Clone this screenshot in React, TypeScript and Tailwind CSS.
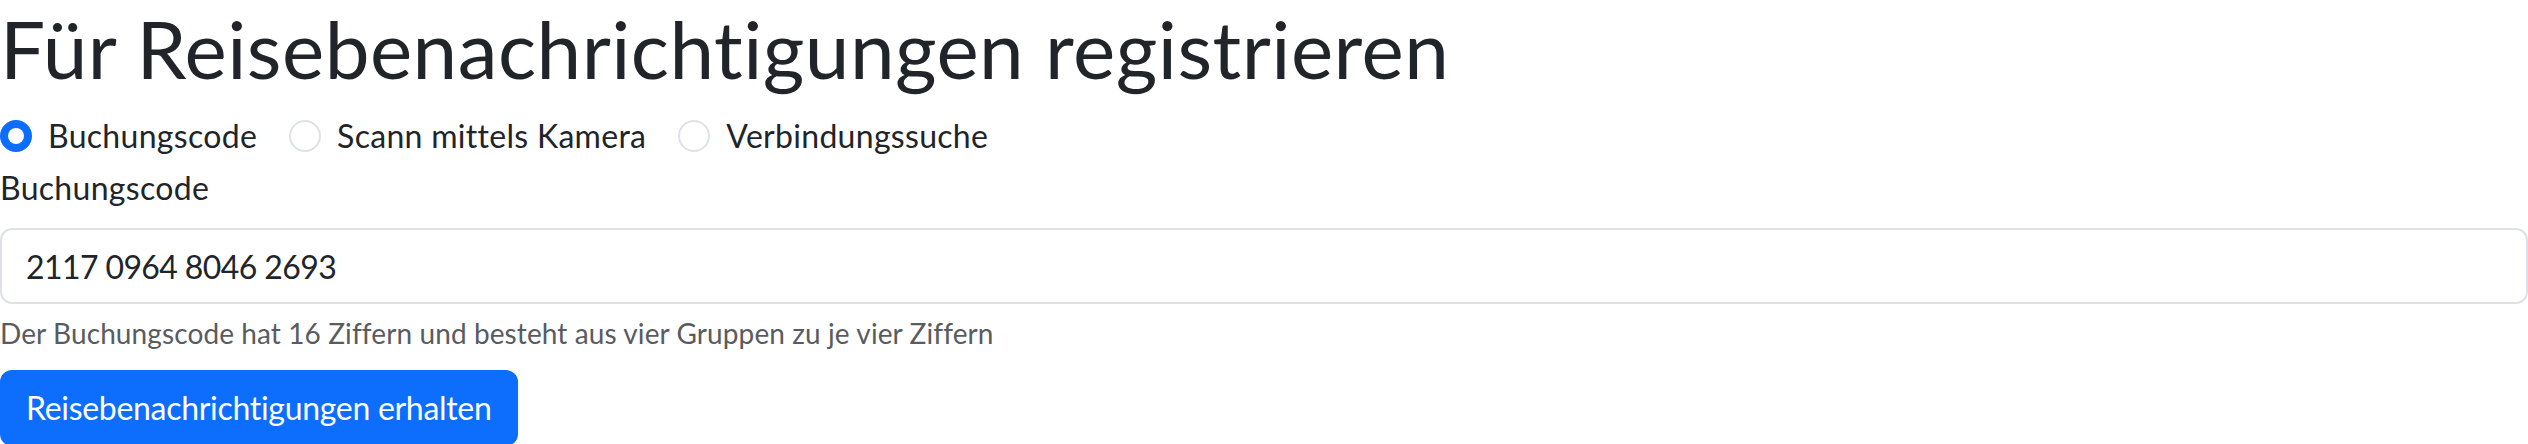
import { useState } from "react";

const modes = [
  { id: "code", label: "Buchungscode" },
  { id: "scan", label: "Scann mittels Kamera" },
  { id: "search", label: "Verbindungssuche" },
];

export default function App() {
  const [mode, setMode] = useState("code");
  const [code, setCode] = useState("2117 0964 8046 2693");

  return (
    <div className="min-h-screen bg-white font-['Lato',sans-serif] text-[32px] leading-[48px] tracking-[0.3px] text-[#212529] [font-variant-ligatures:none]">
      <h1 className="mb-4 text-[80px] leading-[96px] font-normal tracking-[0.45px]">Für Reisebenachrichtigungen registrieren</h1>

      {/* Mode selection */}
      <div className="mb-1 flex h-12 items-center">
        {modes.map((m) => {
          const active = mode === m.id;
          return (
            <label key={m.id} className="mr-8 flex cursor-pointer items-center gap-4">
              <span
                onClick={() => setMode(m.id)}
                className={
                  active
                    ? "flex h-8 w-8 items-center justify-center rounded-full border-2 border-[#0d6efd] bg-[#0d6efd]"
                    : "flex h-8 w-8 items-center justify-center rounded-full border-2 border-[#dee2e6] bg-white"
                }
              >
                {active && <span className="h-4 w-4 rounded-full bg-white" />}
              </span>
              <span onClick={() => setMode(m.id)}>{m.label}</span>
            </label>
          );
        })}
      </div>

      <label className="mb-4 block">Buchungscode</label>
      <input
        value={code}
        onChange={(e) => setCode(e.target.value)}
        className="block h-[76px] w-full rounded-xl border-2 border-[#dee2e6] bg-white px-6 py-3 text-[32px] tracking-[-0.6px] text-[#212529] outline-none"
      />
      <div className="mt-2 text-[28px] leading-[42px] tracking-[0.1px] text-[#595c5f]">
        Der Buchungscode hat 16 Ziffern und besteht aus vier Gruppen zu je vier Ziffern
      </div>

      <button className="mt-4 rounded-xl border-2 border-[#0d6efd] bg-[#0d6efd] px-6 py-3 text-[32px] leading-[48px] tracking-[-0.3px] text-white">
        Reisebenachrichtigungen erhalten
      </button>
    </div>
  );
}
